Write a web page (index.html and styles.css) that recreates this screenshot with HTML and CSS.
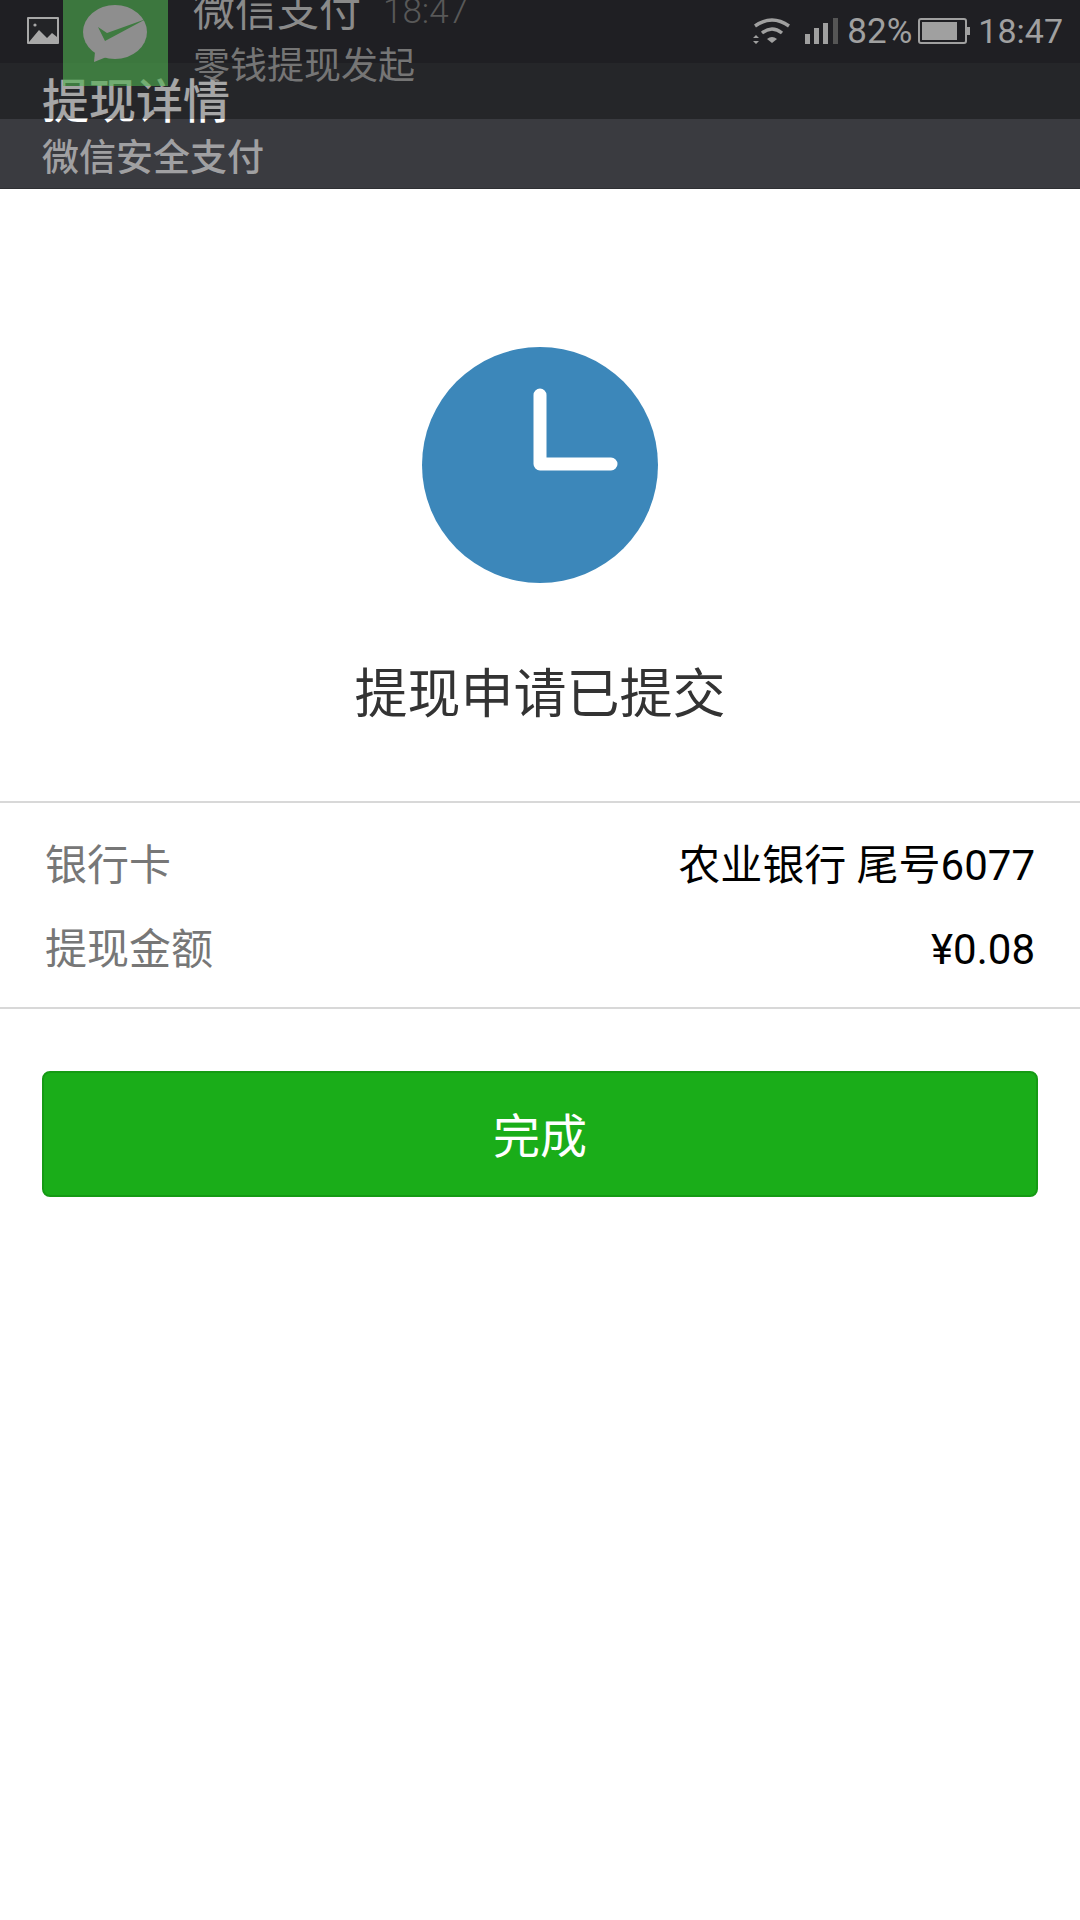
FILE: index.html
```html
<!DOCTYPE html>
<html lang="zh-CN">
<head>
  <meta charset="UTF-8">
  <meta name="viewport" content="width=device-width, initial-scale=1.0">
  <title>提现详情</title>
  <link rel="stylesheet" href="styles.css">
</head>
<body>
  <header class="app-header">
    <div class="status-base"></div>
    <div class="nav-title">提现详情</div>
    <div class="nav-subtitle">微信安全支付</div>

    <!-- notification shade sliding over the header -->
    <div class="shade">
      <div class="shade-left">
        <svg class="picture-icon" viewBox="0 0 32 27" width="32" height="27">
          <rect x="0" y="0" width="32" height="27" rx="1" fill="#a8a8a8"/>
          <rect x="2" y="2" width="28" height="23" fill="#232427"/>
          <circle cx="8" cy="8" r="1.6" fill="#a8a8a8"/>
          <path d="M2 25 L12 13 L20 21 L25 16 L30 20 L30 25 Z" fill="#a8a8a8"/>
        </svg>
        <div class="notify-logo">
          <svg viewBox="0 0 105 86" width="105" height="86">
            <ellipse cx="52" cy="32" rx="32" ry="27" fill="#8e8e8e"/>
            <path d="M32 52 L31 62 L46 56 Z" fill="#8e8e8e"/>
            <path d="M35 27 L42 41 L83 19 L44 33 Z" fill="#3f7b41"/>
          </svg>
        </div>
      </div>
      <div class="notify-text">
        <div class="notify-head">
          <span class="notify-title">微信支付</span>
          <span class="notify-time">18:47</span>
        </div>
        <div class="notify-body">零钱提现发起</div>
      </div>
      <div class="status-icons">
        <svg class="wifi-icon" viewBox="0 0 38 28" width="38" height="28">
          <path d="M2 9 Q19 -3 36 9" fill="none" stroke="#a0a0a0" stroke-width="3.4"/>
          <path d="M9 16 Q19 8 29 16" fill="none" stroke="#a0a0a0" stroke-width="3.4"/>
          <path d="M14 22 Q19 18 24 22 L19 26 Z" fill="#a0a0a0"/>
          <path d="M0 21 L3 18 L6 21 Z M0 24 L6 24 L3 27 Z" fill="#a0a0a0"/>
        </svg>
        <svg class="signal-icon" viewBox="0 0 33 26" width="33" height="26">
          <rect x="0" y="16" width="5" height="10" fill="#a0a0a0"/>
          <rect x="9" y="10" width="5" height="16" fill="#a0a0a0"/>
          <rect x="18" y="5" width="5" height="21" fill="#a0a0a0"/>
          <rect x="28" y="0" width="5" height="26" fill="#555"/>
        </svg>
        <span class="status-pct">82%</span>
        <svg class="battery-icon" viewBox="0 0 52 26" width="52" height="26">
          <rect x="1" y="1" width="47" height="24" rx="2" fill="none" stroke="#a0a0a0" stroke-width="2"/>
          <rect x="4" y="4" width="35" height="18" fill="#a0a0a0"/>
          <rect x="49" y="9" width="3" height="8" fill="#a0a0a0"/>
        </svg>
        <span class="status-time">18:47</span>
      </div>
    </div>
  </header>

  <main>
    <section class="result">
      <svg class="clock-icon" viewBox="0 0 236 236" width="236" height="236">
        <circle cx="118" cy="118" r="118" fill="#3c87ba"/>
        <path d="M118 48 V117 H189" fill="none" stroke="#fff" stroke-width="13" stroke-linecap="round" stroke-linejoin="round"/>
      </svg>
      <h1 class="result-title">提现申请已提交</h1>
    </section>

    <section class="detail">
      <div class="detail-row">
        <span class="detail-label">银行卡</span>
        <span class="detail-value">农业银行 尾号6077</span>
      </div>
      <div class="detail-row">
        <span class="detail-label">提现金额</span>
        <span class="detail-value">¥0.08</span>
      </div>
    </section>

    <div class="actions">
      <button type="button" class="btn">完成</button>
    </div>
  </main>
</body>
</html>
```

FILE: styles.css
```css
* {
  box-sizing: border-box;
  margin: 0;
  padding: 0;
}

body {
  font-family: Roboto, 'Noto Sans CJK SC', sans-serif;
  background-color: #fff;
  color: #333;
  width: 1080px;
  height: 1920px;
  overflow: hidden;
}

.app-header {
  position: relative;
  height: 189px;
  background-color: #3a3b40;
  border-bottom: 1px solid #2e2f33;
  overflow: hidden;
}

.status-base {
  height: 63px;
  background-color: #303136;
}

.nav-title {
  font-size: 47px;
  font-weight: 500;
  line-height: 54px;
  color: #fff;
  padding-left: 42px;
  margin-top: 12px;
}

.nav-subtitle {
  font-size: 37px;
  font-weight: 500;
  line-height: 46px;
  color: #a0a0a2;
  padding-left: 42px;
  margin-top: 7px;
}

.shade {
  position: absolute;
  top: 0;
  left: 0;
  right: 0;
  height: 119px;
  background-color: rgba(0, 0, 0, 0.35);
  display: flex;
}

.shade-left {
  display: flex;
  align-items: flex-start;
  padding-left: 27px;
  gap: 4px;
}

.picture-icon {
  margin-top: 17px;
}

.notify-logo {
  width: 105px;
  height: 86px;
  background-color: rgba(80, 179, 80, 0.6);
}

.notify-text {
  margin-left: 25px;
}

.notify-head {
  display: flex;
  align-items: baseline;
  gap: 22px;
  margin-top: -18px;
  height: 59px;
}

.notify-title {
  font-size: 42px;
  line-height: 59px;
  color: #8a8a8a;
}

.notify-time {
  font-size: 35px;
  font-weight: 300;
  color: #585858;
  margin-top: -3px;
  position: relative;
  top: -3px;
}

.notify-body {
  font-size: 37px;
  line-height: 46px;
  color: #757575;
  margin-top: 3px;
}

.status-icons {
  position: absolute;
  top: 18px;
  right: 17px;
  display: flex;
  align-items: center;
  height: 26px;
  color: #a0a0a0;
  font-size: 34px;
}

.signal-icon {
  margin-left: 14px;
}

.status-pct {
  font-size: 35px;
  margin-left: 9px;
}

.battery-icon {
  margin-left: 6px;
}

.status-time {
  margin-left: 8px;
}

.result {
  display: flex;
  flex-direction: column;
  align-items: center;
  height: 612px;
  padding-top: 158px;
}

.result-title {
  font-size: 53px;
  font-weight: 400;
  line-height: 70px;
  color: #333;
  margin-top: 77px;
}

.detail {
  height: 208px;
  padding: 21px 45px 0;
  border-top: 2px solid #d8d8d8;
  border-bottom: 2px solid #d8d8d8;
}

.detail-row {
  display: flex;
  justify-content: space-between;
  align-items: baseline;
  line-height: 84px;
  font-size: 42px;
}

.detail-label {
  color: #777;
}

.detail-value {
  color: #000;
}

.actions {
  padding: 62px 42px 0;
}

.btn {
  display: block;
  width: 100%;
  height: 126px;
  padding-bottom: 4px;
  background-color: #1aad19;
  border: 2px solid #159a14;
  border-radius: 8px;
  color: #fff;
  font-family: inherit;
  font-size: 47px;
}
```
